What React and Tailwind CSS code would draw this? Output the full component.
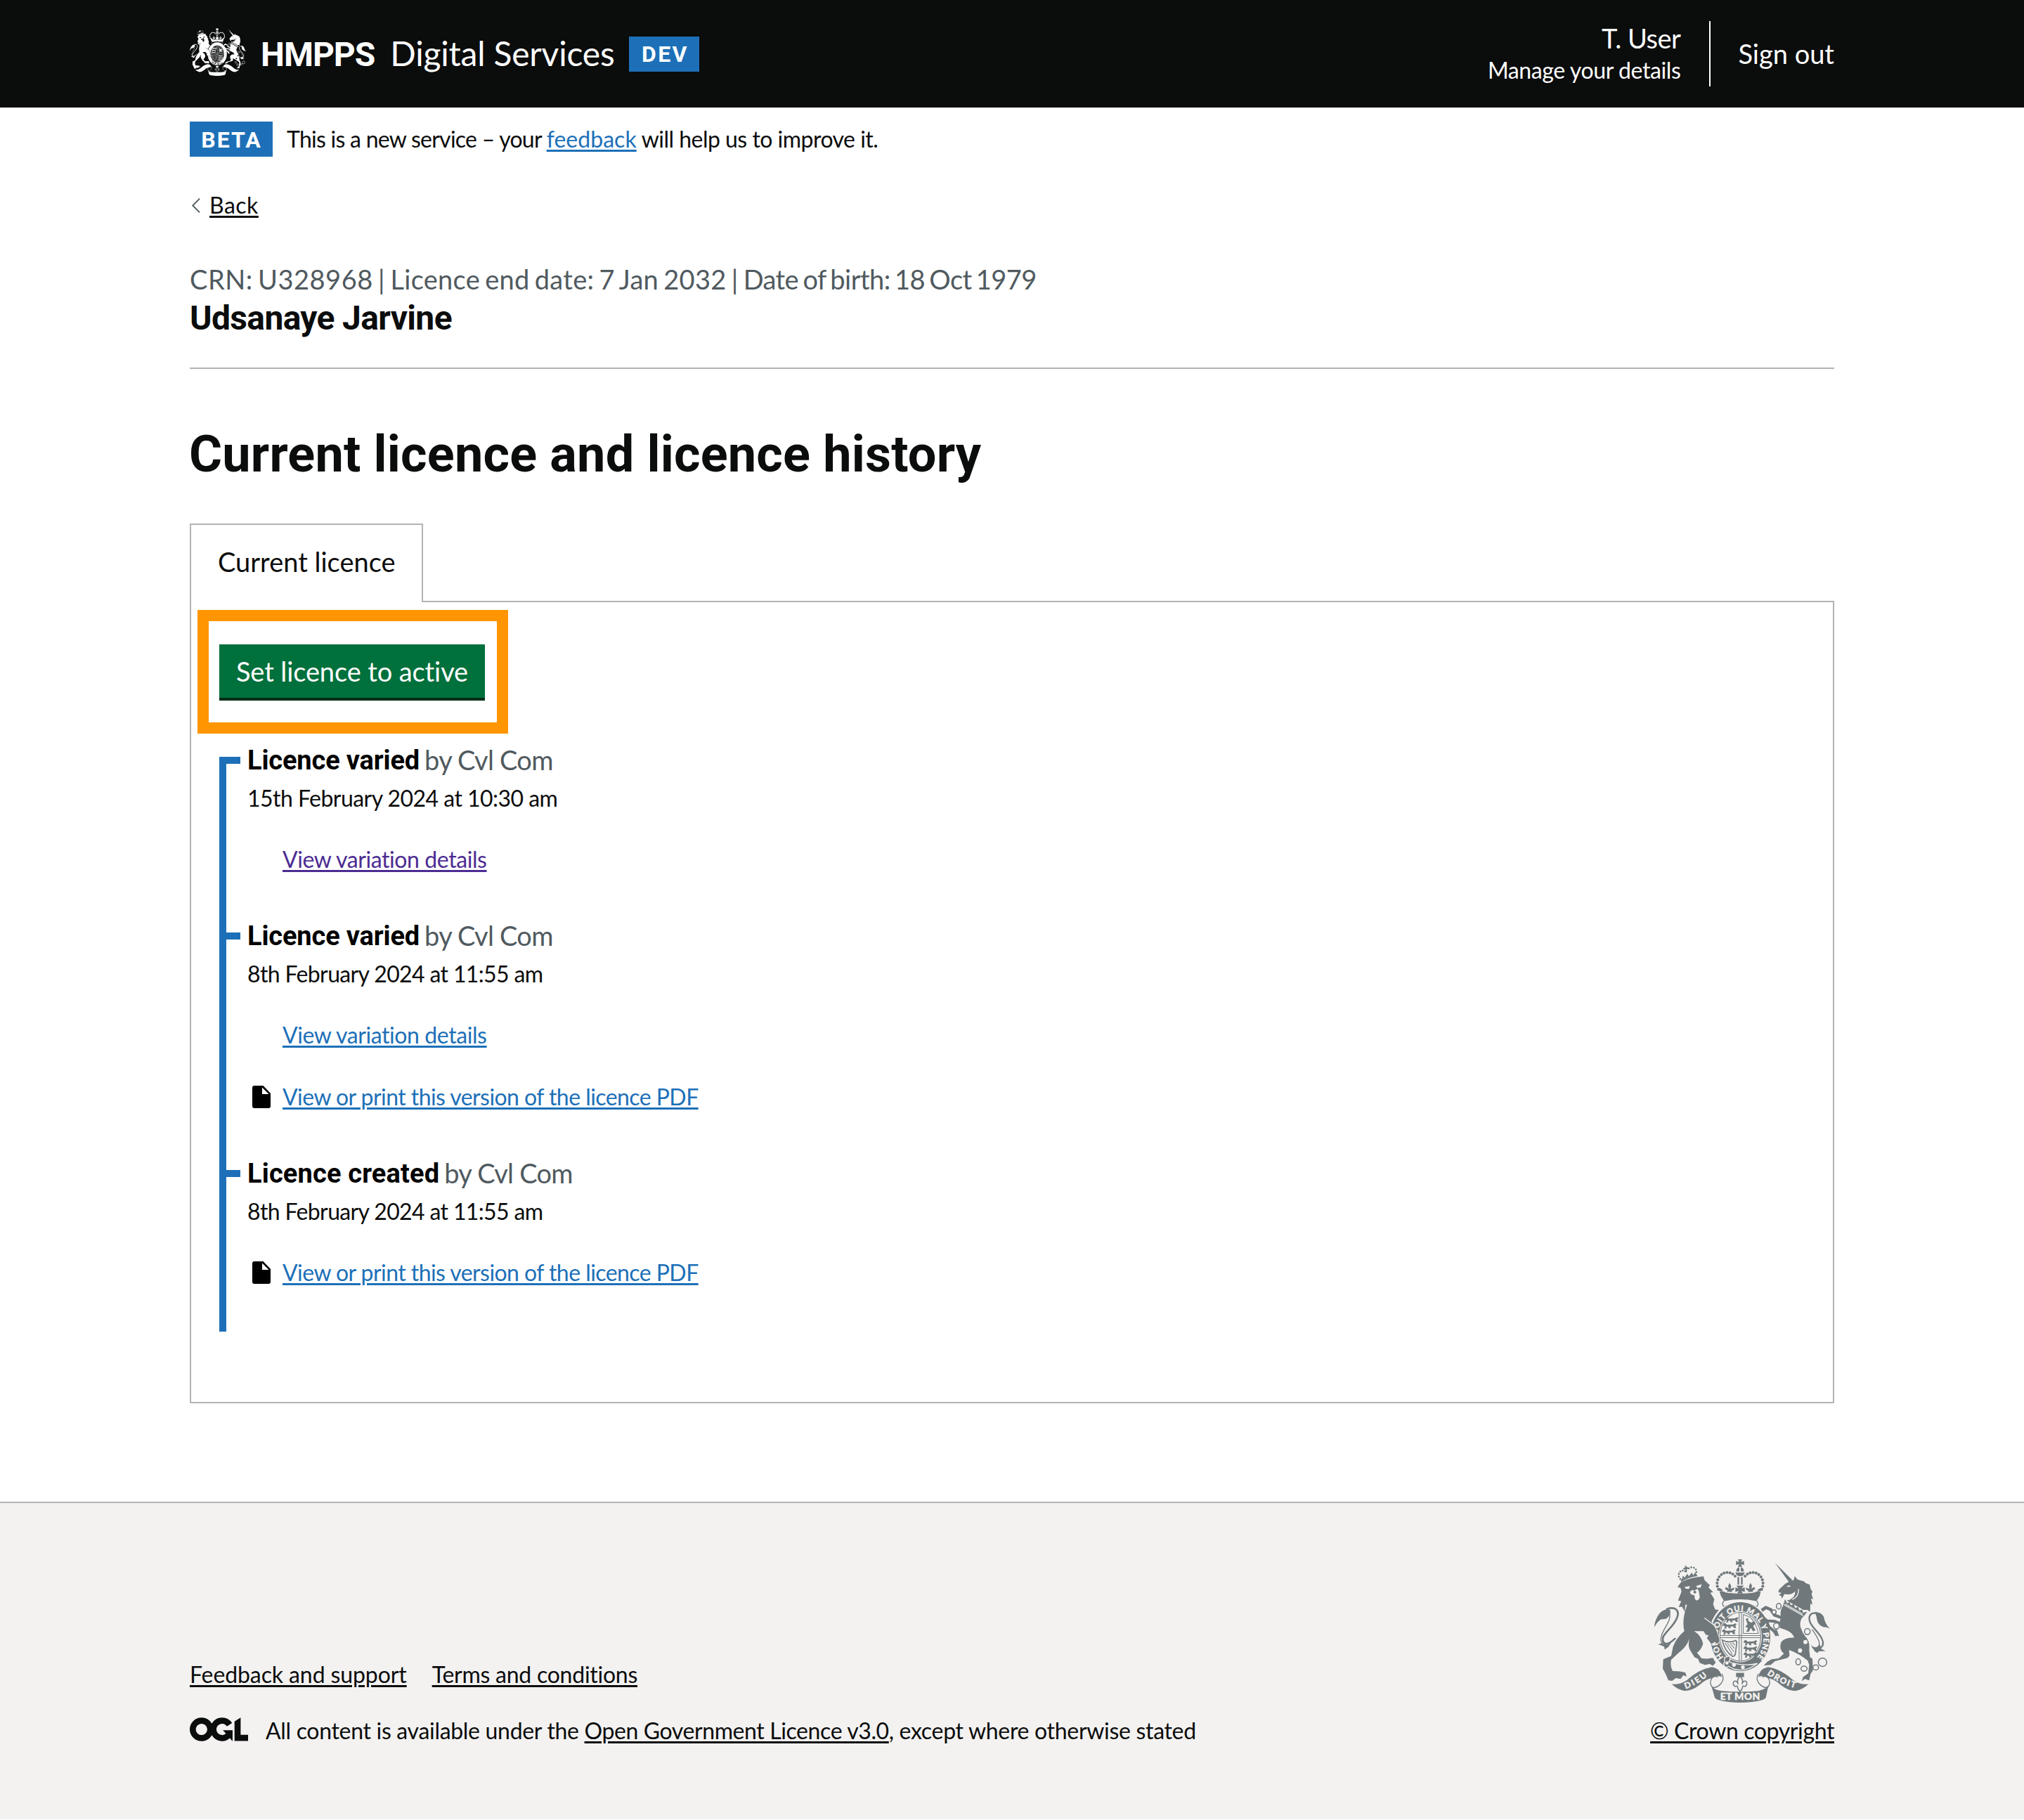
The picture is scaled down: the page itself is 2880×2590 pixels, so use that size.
import React, { useId } from "react";

const LION_PASSANT = "M0 9 L4 2 L10 0 L15 6 L38 5 L46 1 L52 3 L47 9 L50 18 L42 18 L38 12 L28 13 L30 19 L22 19 L20 13 L14 13 L13 20 L5 20 L9 12 Z";

function dotsAlong(cx, cy, rx, ry, from, to, n) {
  return Array.from({ length: n }, (_, i) => {
    const a = ((from + ((to - from) * i) / (n - 1)) * Math.PI) / 180;
    return [cx + rx * Math.cos(a), cy + ry * Math.sin(a)];
  });
}

function CrownHalf({ ink }) {
  return (
    <g fill={ink}>
      {dotsAlong(324, 116, 44, 48, 150, 318, 11).map(([x, y], i) => (
        <circle key={i} cx={x} cy={y} r="6.2" />
      ))}
      <path d="M333 112 L340 126 L338 138 L344 136 Q350 130 354 136 Q352 144 342 146 L344 152 L322 150 L324 144 Q314 142 314 134 Q320 128 325 135 L330 138 L327 126 Z" />
      <path d="M290 134 L304 142 L300 148 L312 150 L312 158 L292 154 L298 148 L286 146 Z" />
    </g>
  );
}

function RibbonHalf({ ink, paper }) {
  return (
    <g>
      <path d="M300 500 Q312 522 298 540 Q280 562 260 558 Q244 540 258 518 Q268 506 284 514" fill={paper} stroke={ink} strokeWidth="4" />
      <path d="M86 544 Q120 548 150 528 Q200 482 255 472 Q292 474 300 514 Q280 502 258 518 Q232 522 204 548 Q172 573 140 573 Q108 566 86 544 Z" fill={ink} />
    </g>
  );
}

function Unicorn({ ink, paper }) {
  return (
    <g transform="translate(375 0)">
      <g fill="none" stroke={ink} strokeLinecap="round">
        <path d="M314 388 C350 398 366 382 352 350 C336 318 306 300 300 275 C294 250 306 240 326 241" strokeWidth="7" />
        <path d="M320 396 C334 392 346 384 340 362 C330 335 318 322 311 312" strokeWidth="4" />
      </g>
      <path d="M322 237 Q346 236 360 256 Q364 284 386 308 Q368 298 362 302 Q336 294 332 272 Q330 256 322 237 Z" fill={ink} />
      <path d="M304 376 L322 404 L334 412 L338 404 L368 403 L350 394 L344 376 L322 392 Z" fill={ink} />
      <g fill="none" stroke={ink} strokeLinejoin="round">
        <path d="M184 262 L150 250 L134 226 L114 218 L98 228" strokeWidth="13" />
        <path d="M180 288 L150 276 L118 274 L106 264 M116 274 L126 300 L150 320 L160 338" strokeWidth="12" />
      </g>
      <path d="M92 224 L112 210 L116 222 L98 236 Z M138 314 L160 312 L170 340 L152 334 Z" fill={ink} />
      <path d="M188 208 L272 256 Q254 276 262 304 Q270 328 284 344 Q302 362 298 400 L302 430 L312 436 L314 486 L304 500 L298 528 L280 522 L266 532 L272 514 L294 498 L298 462 L292 444 Q256 414 212 398 L214 422 L206 432 L152 446 L134 462 L104 465 L120 448 L138 438 L168 434 L190 414 Q168 396 178 366 Q192 344 234 346 Q226 322 196 312 L172 304 L172 280 L178 258 Q170 232 188 208 Z" fill={ink} />
      <path d="M152 27 L226 100 L214 112 Z" fill={ink} />
      <path d="M192 190 L216 184 Q240 172 238 148 Q222 166 192 160 L182 180 L178 168 L168 164 L180 156 L166 152 L170 140 L196 116 L214 106 L232 100 L236 84 L248 98 L276 106 L284 114 L300 120 L304 138 L312 150 L308 160 L315 182 L306 178 L312 206 L303 200 L302 236 L290 228 L262 228 Z" fill={ink} />
      <path d="M226 184 Q256 170 252 138" fill="none" stroke={paper} strokeWidth="4" />
      <path d="M202 128 Q208 120 220 126 Q212 132 202 128 Z" fill={paper} />
      <path d="M196 184 L188 208 L272 256 L288 236" fill={paper} stroke={ink} strokeWidth="3" />
      <path d="M196 184 L204 200 L214 194 L220 208 L232 202 L238 220 L250 214 L256 230 L268 226 L272 240 L286 236 L276 252 L192 204 Z" fill={ink} />
      <path d="M197 203 L270 245" stroke={paper} strokeWidth="3" />
      <g fill="none" stroke={ink} strokeWidth="4.5">
        <ellipse cx="168" cy="212" rx="10" ry="12" />
        <circle cx="148" cy="237" r="9" fill={paper} />
        <ellipse cx="158" cy="296" rx="12" ry="13" fill={paper} />
        <ellipse cx="290" cy="320" rx="12" ry="13" fill={paper} />
        <ellipse cx="251" cy="449" rx="10" ry="13" />
        <ellipse cx="276" cy="478" rx="13" ry="11" />
        <ellipse cx="326" cy="473" rx="12" ry="11" />
        <circle cx="355" cy="451" r="18" />
      </g>
      <g fill={paper}>
        <circle cx="282" cy="365" r="9" />
        <circle cx="259" cy="401" r="9" />
      </g>
    </g>
  );
}

function Lion({ ink, paper }) {
  return (
    <g>
      <g fill="none" stroke={ink} strokeLinecap="round">
        <path d="M66 224 C100 212 120 228 110 258 C100 292 64 316 50 342 C42 372 62 386 100 350" strokeWidth="8" />
        <path d="M78 244 C84 284 42 310 40 352 C40 366 44 372 52 376" strokeWidth="4" />
      </g>
      <path d="M12 302 L13 290 Q22 250 44 234 Q62 220 80 228 Q84 252 62 266 L40 268 Q22 280 12 302 Z" fill={ink} />
      <path d="M28 374 L44 370 L66 376 L88 362 L72 386 L56 397 L54 384 Z" fill={ink} />
      <path
        d="M111 130 L126 109 Q170 88 222 85 L226 100 L238 112 L249 122 L243 132 L263 152 L251 154 L268 182 L263 204 L272 226 L287 228 L272 248 L256 276 L276 312 L288 346 L290 364 L278 372 L272 364 L254 372 L246 360 L236 348 L244 336 L232 334 L222 318 L182 318 Q212 336 220 372 Q212 398 194 410 L214 434 L238 436 L262 432 L274 452 L262 466 L248 458 L228 462 L206 454 L198 436 L184 430 L164 398 Q154 380 162 350 Q150 386 116 410 L84 440 Q78 466 90 488 L120 490 L144 494 L150 512 L136 506 L124 522 L104 518 L88 530 L72 528 L60 500 L48 478 L50 438 L84 424 L92 384 Q106 346 140 318 Q128 270 152 206 L144 206 L142 236 L130 214 L116 216 L127 190 L113 188 L128 150 L124 134 Z"
        fill={ink}
        stroke={paper}
        strokeWidth="5"
        paintOrder="stroke"
      />
      <path d="M226 262 L266 292" stroke={paper} strokeWidth="4" />
      <g fill={paper}>
        <path d="M140 130 L164 126 L160 138 L148 138 Z M190 126 L214 118 L210 132 L196 134 Z" />
        <path d="M163 152 L174 142 L182 146 L196 138 L202 148 L206 174 Q202 188 192 187 Q182 184 184 166 L170 162 Z" />
      </g>
      <circle cx="185" cy="152" r="6" fill={ink} />
      <path d="M124 98 L192 76 L196 84 Q158 88 128 108 Z" fill={ink} />
      <g fill={ink}>
        {dotsAlong(134, 80, 18, 20, 130, 300, 6).map(([x, y], i) => <circle key={i} cx={x} cy={y} r="4" />)}
        {dotsAlong(172, 66, 20, 20, 230, 395, 6).map(([x, y], i) => <circle key={i} cx={x} cy={y} r="4" />)}
        <path d="M142 41 L150 40 L149 46 L156 46 L157 53 L150 54 L152 66 L145 68 L144 55 L136 56 L136 49 L143 48 Z" />
        <path d="M130 96 L134 82 L142 90 L152 74 L160 84 L172 68 L178 80 L188 66 L190 78 Z" />
      </g>
    </g>
  );
}

function Shield({ ink, paper }) {
  return (
    <g>
      <ellipse cx="379" cy="342" rx="133" ry="151" fill={paper} />
      <ellipse cx="379" cy="342" rx="128" ry="147" fill={ink} />
      <ellipse cx="379" cy="342" rx="92" ry="109" fill={paper} />
      <ellipse cx="379" cy="342" rx="87" ry="104" fill="none" stroke={ink} strokeWidth="3" />
      <path d="M374 238 V446 M384 238 V446 M292 337 H466 M292 346 H466" stroke={ink} strokeWidth="3" fill="none" />
      <g fill={ink}>
        {[[312, 258], [304, 284], [300, 310], [392, 356], [392, 382], [392, 408]].map(([x, y], i) => (
          <path key={i} d={LION_PASSANT} transform={`translate(${x} ${y}) scale(1.15)`} />
        ))}
      </g>
      <path d="M392 248 L420 258 Q448 284 456 328 H392 Z" fill="none" stroke={ink} strokeWidth="3" />
      <path d="M402 266 L412 262 L414 276 L428 282 L436 274 L444 284 L434 298 L444 314 L434 320 L424 304 L416 320 L404 322 L412 304 L400 300 L410 288 Z" fill={ink} />
      <path d="M302 356 Q330 372 360 358 L364 364 L358 416 Q354 426 346 426 Q312 404 302 356 Z" fill="none" stroke={ink} strokeWidth="5" />
      <path d="M314 368 L346 418 M324 370 L352 406 M336 370 L354 392 M346 368 L356 378" stroke={ink} strokeWidth="3" />
    </g>
  );
}

function RoyalArms({ ink, paper, motto, className }) {
  const id = useId();
  return (
    <svg viewBox="12 12 750 611" preserveAspectRatio="none" className={className} aria-hidden="true">
      <CrownHalf ink={ink} />
      <g transform="translate(756 0) scale(-1 1)"><CrownHalf ink={ink} /></g>
      <g fill={ink}>
        <path d="M369 12 H387 L382 24 L395 19 V37 L382 32 L387 44 H369 L374 32 L361 37 V19 L374 24 Z" />
        <path d="M361 64 Q364 46 375 46 V64 Z M381 46 Q392 46 395 64 H381 Z M358 68 H398 Q394 84 378 84 Q362 84 358 68 Z" />
        <path d="M367 88 H374 V120 H367 Z M382 88 H389 V120 H382 Z" />
        <path d="M362 124 H394 L384 136 L398 132 V152 L384 146 L390 158 H366 L372 146 L358 152 V132 L372 136 Z" />
        <path d="M290 148 Q378 170 466 148 L462 168 L448 190 Q378 172 310 190 L296 168 Z" />
      </g>
      <path d="M310 188 Q378 174 448 188 Q460 200 450 214 Q378 184 308 214 Q298 200 310 188 Z" fill={paper} stroke={ink} strokeWidth="4" />
      <Shield ink={ink} paper={paper} />
      {motto && (
        <g fill={paper} stroke={paper} strokeWidth="1" className="font-['Lato'] font-black">
          <path id={`${id}g`} d="M308 430 A99 116 0 1 1 452 428" fill="none" stroke="none" />
          <text fontSize="33"><textPath href={`#${id}g`} textLength="512">HONI SOIT QUI MAL Y PENSE</textPath></text>
        </g>
      )}
      <path d="M312 430 L334 424 Q338 440 330 448 L344 454 Q410 468 452 456 L442 462 Q400 494 352 480 L328 468 L318 474 Q302 460 312 450 Z" fill={ink} stroke={paper} strokeWidth="4" />
      <g fill={paper}>
        <circle cx="322" cy="454" r="7" /><circle cx="352" cy="462" r="8" /><circle cx="390" cy="472" r="8" />
      </g>
      <Unicorn ink={ink} paper={paper} />
      <Lion ink={ink} paper={paper} />
      <RibbonHalf ink={ink} paper={paper} />
      <g transform="translate(756 0) scale(-1 1)"><RibbonHalf ink={ink} paper={paper} /></g>
      <path d="M254 546 Q264 570 300 573 Q378 580 456 573 Q490 566 500 546 L488 602 Q476 620 378 623 Q284 620 270 602 Z" fill={ink} />
      <path d="M361 496 H395 V514 H361 Z" fill={ink} />
      <path d="M378 510 Q394 526 386 544 Q392 528 404 532 Q412 544 400 554 L390 552 Q388 566 378 576 Q368 566 366 552 L356 554 Q344 544 352 532 Q364 528 370 544 Q362 526 378 510 Z" fill={paper} stroke={ink} strokeWidth="4.5" />
      {motto && (
        <g fill={paper} stroke={paper} strokeWidth="1" className="font-['Lato'] font-black">
          <path id={`${id}d`} d="M146 565 Q200 546 250 499" fill="none" stroke="none" />
          <path id={`${id}r`} d="M492 502 Q548 544 622 564" fill="none" stroke="none" />
          <text fontSize="36"><textPath href={`#${id}d`} textLength="108">DIEU</textPath></text>
          <text fontSize="36"><textPath href={`#${id}r`} textLength="134">DROIT</textPath></text>
          <text x="293" y="612" textLength="170" fontSize="42">ET MON</text>
        </g>
      )}
    </svg>
  );
}

function OglLogo() {
  return (
    <svg viewBox="0 0 483.2 195.7" className="-mt-[5px] h-[34px] w-[83px]" fill="currentColor" aria-hidden="true">
      <path d="M421.5 142.8V.1l-50.7 32.3v161.1h112.4v-50.7zm-122.3-9.6A47.12 47.12 0 0 1 221 97.8c0-26 21.1-47.1 47.1-47.1 16.7 0 31.4 8.7 39.7 21.8l42.7-27.2A97.63 97.63 0 0 0 268.1 0c-36.5 0-68.3 20.1-85.1 49.7A98 98 0 0 0 97.8 0C43.9 0 0 43.9 0 97.8s43.9 97.8 97.8 97.8c36.5 0 68.3-20.1 85.1-49.7a97.76 97.76 0 0 0 149.6 25.4l19.4 22.2h3v-87.8h-80l24.3 27.5zM97.8 145c-26 0-47.1-21.1-47.1-47.1s21.1-47.1 47.1-47.1 47.1 21.1 47.1 47.1S123.8 145 97.8 145" />
    </svg>
  );
}

function Tag({ children, className }) {
  return (
    <strong className={`flex h-[50px] items-center justify-center bg-[#1d70b8] font-['Roboto'] text-[32px] leading-[50px] font-bold text-white ${className}`}>
      {children}
    </strong>
  );
}

function Link({ children, className = "text-[#1d70b8]" }) {
  return <a className={`underline decoration-[3px] underline-offset-[3px] ${className}`}>{children}</a>;
}

function DocumentIcon() {
  return (
    <svg viewBox="0 0 26 32" className="mr-[17px] ml-[37px] h-8 w-[26px]" aria-hidden="true">
      <path fillRule="evenodd" d="M3 0H15.5L26 11V29a3 3 0 0 1-3 3H3a3 3 0 0 1-3-3V3a3 3 0 0 1 3-3ZM14 2.5V12H23.5Z" fill="#000" />
    </svg>
  );
}

function Event({ title, titleClass, date, dateClass, children }) {
  return (
    <li className="pb-16">
      <div className="flex h-[50px] items-center text-[38px] leading-[50px]">
        <span className="h-2.5 w-5 bg-[#1d70b8]" />
        <h2 className={`ml-2.5 font-['Roboto'] font-bold whitespace-nowrap text-black ${titleClass}`}>{title}</h2>
        <span className="-mt-[3px] ml-[7px] tracking-[-0.75px] text-[#505a5f]">by Cvl Com</span>
      </div>
      <p className={`mt-[9px] pl-[30px] ${dateClass}`}>{date}</p>
      <div className="mt-[47px] flex flex-col gap-12">{children}</div>
    </li>
  );
}

function VariationLink({ className }) {
  return (
    <p className="pl-20 tracking-[-0.41px]">
      <Link className={className}>View variation details</Link>
    </p>
  );
}

function PdfLink() {
  return (
    <p className="flex items-center tracking-[-0.56px]">
      <DocumentIcon />
      <Link>View or print this version of the licence PDF</Link>
    </p>
  );
}

export default function App() {
  return (
    <div className="flex h-[2590px] w-[2880px] flex-col bg-white font-['Lato',sans-serif] text-[32px] leading-[40px] text-[#0b0c0c]">
      <header className="h-[153px] bg-[#0b0c0c] text-white">
        <div className="mx-auto flex h-full w-[2340px] items-center">
          <RoyalArms ink="#ffffff" paper="#0b0c0c" className="-mt-1.5 h-[68px] w-20" />
          <div className="ml-[21px] flex items-baseline text-[48px] leading-[60px] whitespace-nowrap">
            <span className="font-['Roboto'] font-bold tracking-[-1px]">HMPPS</span>
            <span className="ml-[22px] tracking-[-0.2px]">Digital Services</span>
          </div>
          <Tag className="ml-[21px] w-[100px] pt-px pl-0.5 tracking-[2.4px]">DEV</Tag>
          <div className="ml-auto flex h-[93px] flex-col items-end border-r-2 border-white pt-0.5 pr-[41px] leading-[45px]">
            <span className="text-[38px] tracking-[-0.5px]">T. User</span>
            <a className="tracking-[-0.4px]">Manage your details</a>
          </div>
          <a className="ml-[39px] pb-px text-[38px] leading-[50px]">Sign out</a>
        </div>
      </header>

      <main className="mx-auto w-[2340px]">
        <div className="flex items-center pt-5">
          <Tag className="w-[118px] pt-px pl-px tracking-[2px]">BETA</Tag>
          <p className="-mt-px ml-5 leading-[44px] tracking-[-0.52px]">
            <span className="tracking-[-0.74px]">This is a new service – your </span>
            <Link className="tracking-[0.03px] text-[#1d70b8]">feedback</Link> will help us to improve it.
          </p>
        </div>

        <div className="mt-[49px] flex items-center">
          <svg viewBox="0 0 13 23" className="mr-[13px] ml-[3px] h-[23px] w-3" fill="none" aria-hidden="true">
            <path d="M12 .8 1.4 11.5 12 22.2" stroke="#505a5f" strokeWidth="2" />
          </svg>
          <Link className="tracking-[0.5px]">Back</Link>
        </div>

        <p className="mt-[60px] text-[38px] leading-[50px] [word-spacing:-2.9px] text-[#505a5f]">
          <span className="tracking-[0.5px]">CRN: U328968 | </span>
          <span className="tracking-[0.3px]">Licence end date: 7 Jan 2032 | </span>
          <span className="tracking-[-0.54px]">Date of birth: 18 Oct 1979</span>
        </p>
        <p className="mt-px font-['Roboto'] text-[48px] leading-[60px] font-bold tracking-[-0.65px]">Udsanaye Jarvine</p>
        <hr className="mt-10 h-0.5 border-0 bg-[#b1b4b6]" />
        <h1 className="mt-[82px] -ml-px font-['Roboto'] text-[72px] leading-[80px] font-bold tracking-[0.2px]">
          Current licence and licence history
        </h1>

        <div className="relative z-10 mt-[58px] -mb-0.5 h-28 w-[332px] border-2 border-b-0 border-[#b1b4b6] bg-white pt-[27px] pl-[38px] text-[38px] leading-[50px]">
          Current licence
        </div>
        <section className="h-[1142px] border-2 border-[#b1b4b6] px-10 pt-[60px]">
          <div className="relative w-[378px]">
            <button className="block h-20 w-[378px] border-b-4 border-[#002d18] bg-[#00703c] text-center text-[38px] leading-[76px] tracking-[-0.1px] text-white">
              Set licence to active
            </button>
            <div className="absolute -top-[49px] -left-[31px] h-[176px] w-[442px] border-[16px] border-[#ff9500]" />
          </div>
          <div className="mt-[60px] flex">
            <div className="mt-5 w-2.5 bg-[#1d70b8]" />
            <ol>
              <Event title="Licence varied" titleClass="tracking-[-0.15px]" date="15th February 2024 at 10:30 am" dateClass="tracking-[-0.54px]">
                <VariationLink className="text-[#4c2c92]" />
              </Event>
              <Event title="Licence varied" titleClass="tracking-[-0.15px]" date="8th February 2024 at 11:55 am" dateClass="tracking-[-0.64px]">
                <VariationLink />
                <PdfLink />
              </Event>
              <Event title="Licence created" titleClass="tracking-[0.15px]" date="8th February 2024 at 11:55 am" dateClass="tracking-[-0.64px]">
                <PdfLink />
              </Event>
            </ol>
          </div>
        </section>
      </main>

      <footer className="mt-[140px] mb-px flex-1 border-t-2 border-[#b1b4b6] bg-[#f3f2f1]">
        <div className="mx-auto flex w-[2340px] items-end justify-between pt-20">
          <div>
            <div className="flex gap-9">
              <Link className="tracking-[-0.1px]">Feedback and support</Link>
              <Link className="tracking-[-0.25px]">Terms and conditions</Link>
            </div>
            <div className="mt-10 flex items-center">
              <OglLogo />
              <p className="ml-[25px] tracking-[-0.31px]">
                All content is available under the <Link className="tracking-[-0.4px]">Open Government Licence v3.0</Link>, except where otherwise stated
              </p>
            </div>
          </div>
          <div className="flex flex-col items-end">
            <RoyalArms ink="#70787b" paper="#f3f2f1" motto className="mr-1.5 h-[204px] w-[250px]" />
            <Link className="mt-5 tracking-[-0.38px]">© Crown copyright</Link>
          </div>
        </div>
      </footer>
    </div>
  );
}
